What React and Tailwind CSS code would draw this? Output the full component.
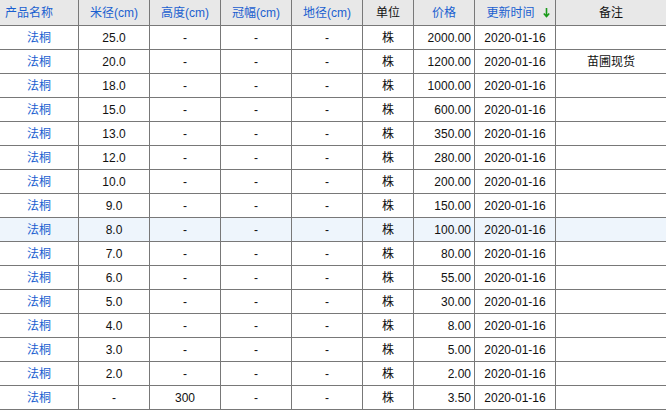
const rows=[["25.0","-","2000.00",""],["20.0","-","1200.00","苗圃现货"],["18.0","-","1000.00",""],["15.0","-","600.00",""],["13.0","-","350.00",""],["12.0","-","280.00",""],["10.0","-","200.00",""],["9.0","-","150.00",""],["8.0","-","100.00",""],["7.0","-","80.00",""],["6.0","-","55.00",""],["5.0","-","30.00",""],["4.0","-","8.00",""],["3.0","-","5.00",""],["2.0","-","2.00",""],["-","300","3.50",""]];
const widths=[79,71,71,71,71,51,61,81,111];
export default function App(){
const c="border border-[#787878] h-[24px] p-0";
return(<div className="w-[666px] h-[410px] overflow-hidden bg-white" style={{fontFamily:'"Liberation Sans","Noto Sans CJK SC",sans-serif'}}>
<table className="border-collapse text-[12px] text-[#111] -ml-px -mt-px" style={{width:668,tableLayout:"fixed"}}>
<colgroup>{widths.map((w,i)=><col key={i} style={{width:w}}/>)}</colgroup>
<thead><tr className="bg-[#e8e8e8] h-[26px]">
<th className={c+" font-normal text-left pl-[5px] text-[#1a5fd0]"}>产品名称</th>
<th className={c+" font-normal text-[#1a5fd0]"}>米径(cm)</th>
<th className={c+" font-normal text-[#1a5fd0]"}>高度(cm)</th>
<th className={c+" font-normal text-[#1a5fd0]"}>冠幅(cm)</th>
<th className={c+" font-normal text-[#1a5fd0]"}>地径(cm)</th>
<th className={c+" font-normal"}>单位</th>
<th className={c+" font-normal text-[#1a5fd0]"}>价格</th>
<th className={c+" font-normal text-[#1a5fd0]"}><span className="pl-[6px]">更新时间</span><svg className="inline-block ml-[8px] align-middle" width="7" height="10" viewBox="0 0 7 10"><path d="M3.5 0v8M0.8 5.5L3.5 8.5L6.2 5.5" stroke="#1a9a1a" strokeWidth="1.6" fill="none"/></svg></th>
<th className={c+" font-normal"}>备注</th>
</tr></thead>
<tbody>{rows.map((r,i)=>(<tr key={i} className={i===8?"bg-[#eef5fc]":""}>
<td className={c+" text-center text-[#1a5fd0]"}>法桐</td>
<td className={c+" text-center"}>{r[0]}</td>
<td className={c+" text-center"}>{r[1]}</td>
<td className={c+" text-center"}>-</td>
<td className={c+" text-center"}>-</td>
<td className={c+" text-center"}>株</td>
<td className={c+" text-right pr-[3px]"}>{r[2]}</td>
<td className={c+" text-center"}>2020-01-16</td>
<td className={c+" text-center"}>{r[3]}</td>
</tr>))}</tbody>
</table></div>);}
